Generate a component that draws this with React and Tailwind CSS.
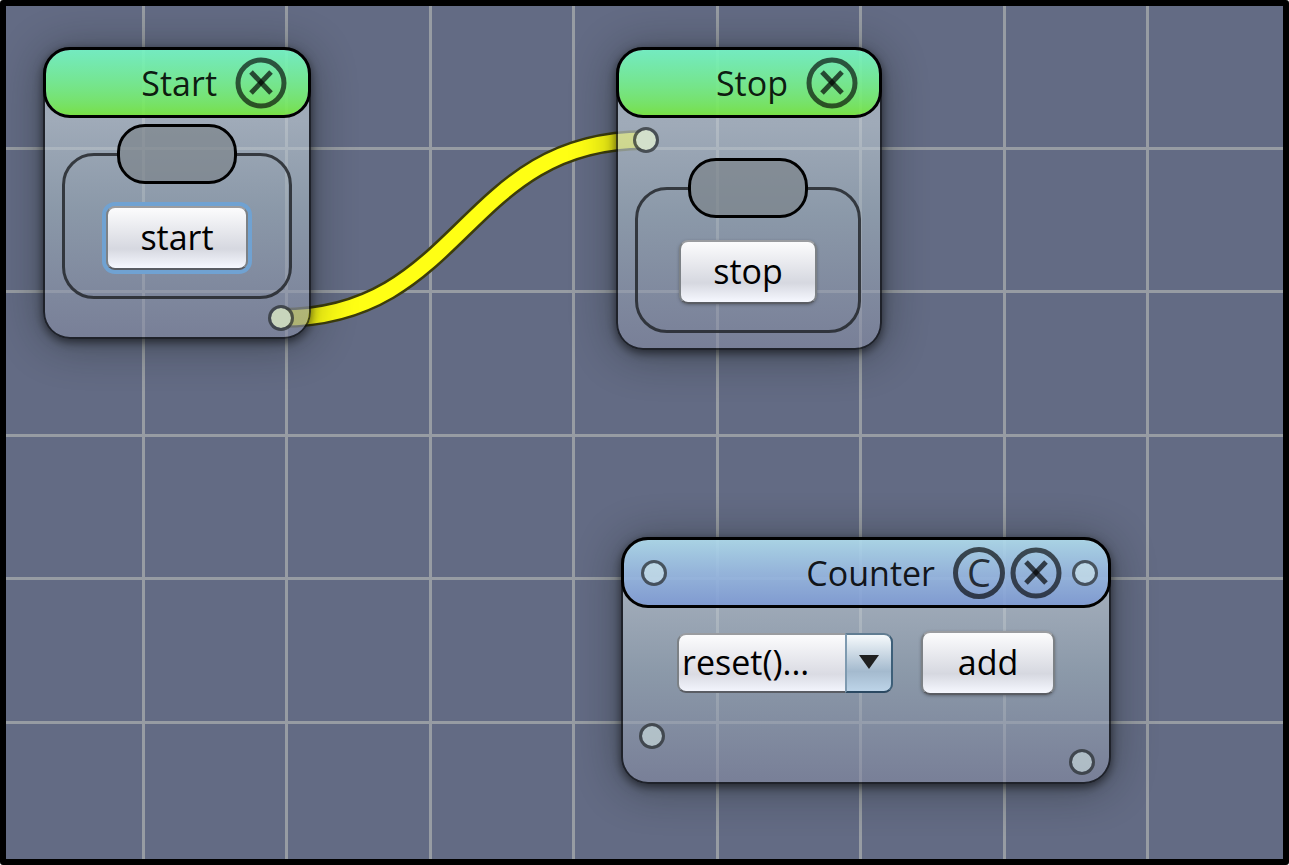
import React, { useState } from 'react';

const GRID_STEPS = Array.from({ length: 24 }, (_, i) => Math.round((i * 1004) / 7));

// Wire between the Start output and the Stop input
const WIRE = 'M275 312 C457 312 457 134 639 134';

const HEADER_COLORS = {
  green: 'from-[#69fac2]/80 to-[#6eed26]/80',
  blue: 'from-[#abdcee]/80 via-[#92b6e2]/80 to-[#7997d6]/80',
};

const PORT_COLORS = {
  idle: 'bg-[#e2f5f0]/50',
  output: 'bg-[#c8d5bc]',
  input: 'bg-[#d3e0cb]',
};

const Canvas = () => (
  <svg className="absolute inset-0 h-full w-full" aria-hidden="true">
    <g fill="#979ca3">
      {GRID_STEPS.map((step) => (
        <rect key={`v${step}`} x={136 + step} y="0" width="3" height="100%" />
      ))}
      {GRID_STEPS.map((step) => (
        <rect key={`h${step}`} x="0" y={141 + step} width="100%" height="3" />
      ))}
    </g>
    <path d={WIRE} fill="none" stroke="#3c3c0c" strokeWidth="20" />
    <path d={WIRE} fill="none" stroke="#ffff14" strokeWidth="15" />
  </svg>
);

const Port = ({ label, color = 'idle', className = '' }) => (
  <button
    type="button"
    aria-label={label}
    className={`block h-[26px] w-[26px] shrink-0 rounded-full border-[3px] border-[#2c3234]/75 bg-clip-padding ${PORT_COLORS[color]} ${className}`}
  />
);

const CloseButton = ({ onClick }) => (
  <button type="button" aria-label="Close" onClick={onClick} className="block h-[52px] w-[52px] shrink-0">
    <svg viewBox="0 0 52 52" className="h-full w-full" fill="none" stroke="#000000">
      <circle cx="26" cy="26" r="23" strokeWidth="5" opacity="0.64" />
      <path d="M16 15 L36 36" strokeWidth="5" opacity="0.68" />
      <path d="M36 15 L16 36" strokeWidth="5" opacity="0.68" />
    </svg>
  </button>
);

const Node = ({ title, color, className, headerClass = 'pr-[21px]', left, actions, right, children }) => (
  <section
    className={`absolute rounded-[27px] border-2 border-[#0e1014]/80 bg-linear-to-b from-[#becad3]/67 from-25% via-[#a0b0bc]/67 via-55% to-[#848aa2]/67 bg-clip-padding shadow-[0_3px_10px_rgba(0,0,0,0.55),0_4px_44px_rgba(20,26,20,0.45)] ${className}`}
  >
    <header
      className={`-mx-0.5 -mt-0.5 flex h-[71px] items-center rounded-[27px] border-[3px] border-black bg-linear-to-b bg-clip-padding ${HEADER_COLORS[color]} ${headerClass}`}
    >
      {left}
      <h2 className="mr-[18px] ml-auto text-[34px] leading-10 text-black/90">{title}</h2>
      {actions}
      <CloseButton />
      {right}
    </header>
    {children}
  </section>
);

const PushButton = ({ focused, className, children }) => (
  <button
    type="button"
    className={`block h-16 rounded-[9px] border-2 border-t-[#9a9ca0] border-x-[#7c8186] border-b-[#5a5d64] bg-linear-to-b from-[#fcfcfd] via-[#d6d8e0] via-68% to-[#f6f8ff] pb-0.5 text-[34px] leading-10 text-black ${
      focused ? 'ring-4 ring-[#70a2d2]' : 'shadow-[0_1px_3px_rgba(60,64,72,0.5)]'
    } ${className}`}
  >
    {children}
  </button>
);

const ControlGroup = ({ label, children }) => (
  <fieldset aria-label={label} className="rounded-[32px] border-[3px] border-[#23272c]/85 pb-[26px]">
    <legend className="mx-auto h-[60px] w-[120px] rounded-[28px] border-[3px] border-black bg-[#7a8187]/65 bg-clip-padding" />
    <div className="flex justify-center pt-[22px]">{children}</div>
  </fieldset>
);

const MethodSelect = () => {
  const [method, setMethod] = useState('reset');

  return (
    <div className="relative">
      <select
        aria-label="Method"
        value={method}
        onChange={(e) => setMethod(e.target.value)}
        className="block h-[60px] w-[216px] appearance-none rounded-[9px] border-2 border-t-[#9a9ca0] border-x-[#7c8186] border-b-[#5a5d64] bg-linear-to-b from-[#fcfcfd] via-[#dadbe3] via-70% to-[#f2f4fc] pb-0.5 pl-[3px] text-[34px] leading-10 text-black"
      >
        <option value="reset">reset()...</option>
      </select>
      <span className="pointer-events-none absolute inset-y-0 right-0 flex w-12 items-center justify-center rounded-r-[9px] border-2 border-t-[#617d92] border-r-[#3d5f79] border-b-[#2b4962] border-l-[#7e9ab0] bg-linear-to-b from-[#f6fafc] via-[#a4bace] via-65% to-[#bdd4e8]">
        <svg viewBox="0 0 20 16" className="h-4 w-5" fill="#1f2020">
          <path d="M0 0 H20 L10 14 Z" />
        </svg>
      </span>
    </div>
  );
};

const App = () => {
  return (
    <main className="relative min-h-screen overflow-hidden rounded-[3px] border-[6px] border-black bg-[#636b84] font-['Open_Sans','Noto_Sans',sans-serif]">
      <Canvas />

      {/* Start node */}
      <Node title="Start" color="green" className="top-[41px] left-[37px] w-[268px]">
        <div className="px-[17px] pt-1.5">
          <ControlGroup label="Start">
            <PushButton focused className="w-[142px]">start</PushButton>
          </ControlGroup>
        </div>
        <div className="flex justify-end pt-1.5 pr-[15px] pb-1.5">
          <Port label="Start output" color="output" />
        </div>
      </Node>

      {/* Stop node */}
      <Node title="Stop" color="green" className="top-[41px] left-[610px] w-[266px]">
        <div className="pt-[9px] pl-[15px]">
          <Port label="Stop input" color="input" />
        </div>
        <div className="pt-[5px] pr-[19px] pb-[15px] pl-[17px]">
          <ControlGroup label="Stop">
            <PushButton className="w-[138px]">stop</PushButton>
          </ControlGroup>
        </div>
      </Node>

      {/* Counter node */}
      <Node
        title="Counter"
        color="blue"
        className="top-[531px] left-[615px] w-[490px]"
        headerClass="pl-[17px] pr-[10px]"
        left={<Port label="Counter control input" />}
        actions={
          <button
            type="button"
            className="mr-[5px] flex h-[52px] w-[52px] shrink-0 items-center justify-center rounded-full border-[5px] border-black/65 pb-0.5 text-[38px] leading-10 text-black/75"
          >
            C
          </button>
        }
        right={<Port label="Counter control output" className="ml-[10px]" />}
      >
        <div className="flex items-center justify-center gap-7 pt-[23px]">
          <MethodSelect />
          <PushButton className="w-[134px]">add</PushButton>
        </div>
        <div className="flex items-start justify-between pt-7 pr-[14px] pb-[7px] pl-4">
          <Port label="Counter input" />
          <Port label="Counter output" className="mt-[26px]" />
        </div>
      </Node>
    </main>
  );
};

export default App;
